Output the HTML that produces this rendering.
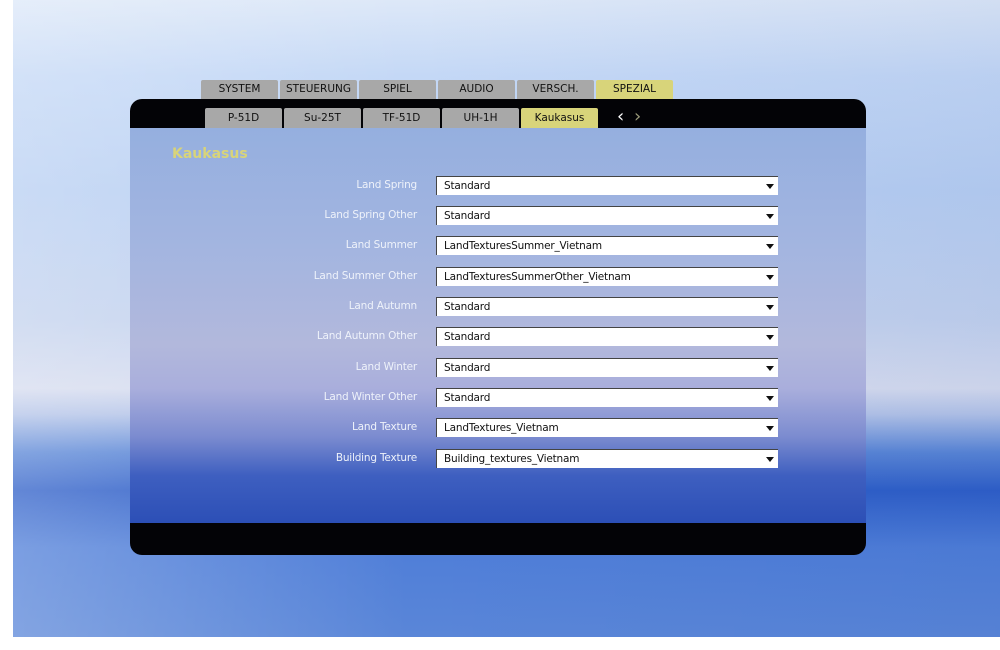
<!DOCTYPE html>
<html><head><meta charset="utf-8"><style>
*{margin:0;padding:0;box-sizing:border-box}
body{width:1000px;height:650px;background:#fff;position:relative;overflow:hidden;font-family:"DejaVu Sans","Liberation Sans",sans-serif;font-size:10.5px}
#bg{position:absolute;left:13px;top:0;width:987px;height:637px;
background:linear-gradient(180deg,#dde8f8 0%,#c4d8f6 12%,#b8cff2 30%,#c3d2ee 50%,#d6dcef 61%,#b4c4e8 65%,#5a86d6 71%,#2f5fc8 77%,#4f7ed8 86%,#5a86d8 100%)}
#bg2{position:absolute;left:13px;top:0;width:987px;height:637px;background:linear-gradient(90deg,rgba(255,255,255,.25),rgba(255,255,255,0) 40%,rgba(0,40,140,.05))}
.tab{position:absolute;height:19px;width:77px;background:#a8a8a8;color:#111;text-align:center;line-height:19px;border-radius:2px 2px 0 0}
#panel{position:absolute;left:130px;top:99px;width:736px;height:456px;border-radius:12px;background:#030306;overflow:hidden}
#content{position:absolute;left:0;top:29px;width:736px;height:395px;
background:linear-gradient(180deg,#95afdf 0%,#a3b5e0 30%,#b2b8dc 55%,#a9aedc 66%,#7c8cd0 78%,#3e5fc0 88%,#2c4fb6 100%)}
.stab{position:absolute;top:9px;height:20px;width:77px;background:#a8a8a8;color:#111;text-align:center;line-height:20px;border-radius:2px 2px 0 0}
.tab.sel,.stab.sel{background:#d8d47a}
.lbl{position:absolute;right:449px;color:#eef2fa;text-align:right;white-space:nowrap;letter-spacing:-.2px}
.dd{position:absolute;left:306px;width:342px;height:19px;background:#fff;border-top:1px solid #444;border-left:1px solid #444;color:#111;line-height:18px;padding-left:7px;letter-spacing:-.2px}
.dd:after{content:"";position:absolute;right:4px;top:7px;border-left:4px solid transparent;border-right:4px solid transparent;border-top:5px solid #111}
</style></head><body>
<div id="bg"></div><div id="bg2"></div>
<div class="tab" style="left:201px;top:80px">SYSTEM</div>
<div class="tab" style="left:280px;top:80px">STEUERUNG</div>
<div class="tab" style="left:359px;top:80px">SPIEL</div>
<div class="tab" style="left:438px;top:80px">AUDIO</div>
<div class="tab" style="left:517px;top:80px">VERSCH.</div>
<div class="tab sel" style="left:596px;top:80px">SPEZIAL</div>
<div id="panel">
<div class="stab" style="left:75px">P-51D</div>
<div class="stab" style="left:154px">Su-25T</div>
<div class="stab" style="left:233px">TF-51D</div>
<div class="stab" style="left:312px">UH-1H</div>
<div class="stab sel" style="left:391px">Kaukasus</div>
<div style="position:absolute;left:487px;top:8px;color:#fff;font-size:18px;line-height:20px">&#8249;</div>
<div style="position:absolute;left:504px;top:8px;color:#9a9a7a;font-size:18px;line-height:20px">&#8250;</div>
<div id="content">
<div style="position:absolute;left:42px;top:18px;color:#d8d47a;font-weight:bold;font-size:14px">Kaukasus</div>
<div class="lbl" style="top:51px">Land Spring</div><div class="dd" style="top:48px">Standard</div>
<div class="lbl" style="top:81px">Land Spring Other</div><div class="dd" style="top:78px">Standard</div>
<div class="lbl" style="top:111px">Land Summer</div><div class="dd" style="top:108px">LandTexturesSummer_Vietnam</div>
<div class="lbl" style="top:142px">Land Summer Other</div><div class="dd" style="top:139px">LandTexturesSummerOther_Vietnam</div>
<div class="lbl" style="top:172px">Land Autumn</div><div class="dd" style="top:169px">Standard</div>
<div class="lbl" style="top:202px">Land Autumn Other</div><div class="dd" style="top:199px">Standard</div>
<div class="lbl" style="top:233px">Land Winter</div><div class="dd" style="top:230px">Standard</div>
<div class="lbl" style="top:263px">Land Winter Other</div><div class="dd" style="top:260px">Standard</div>
<div class="lbl" style="top:293px">Land Texture</div><div class="dd" style="top:290px">LandTextures_Vietnam</div>
<div class="lbl" style="top:324px">Building Texture</div><div class="dd" style="top:321px">Building_textures_Vietnam</div>
</div>
</div>
</body></html>
